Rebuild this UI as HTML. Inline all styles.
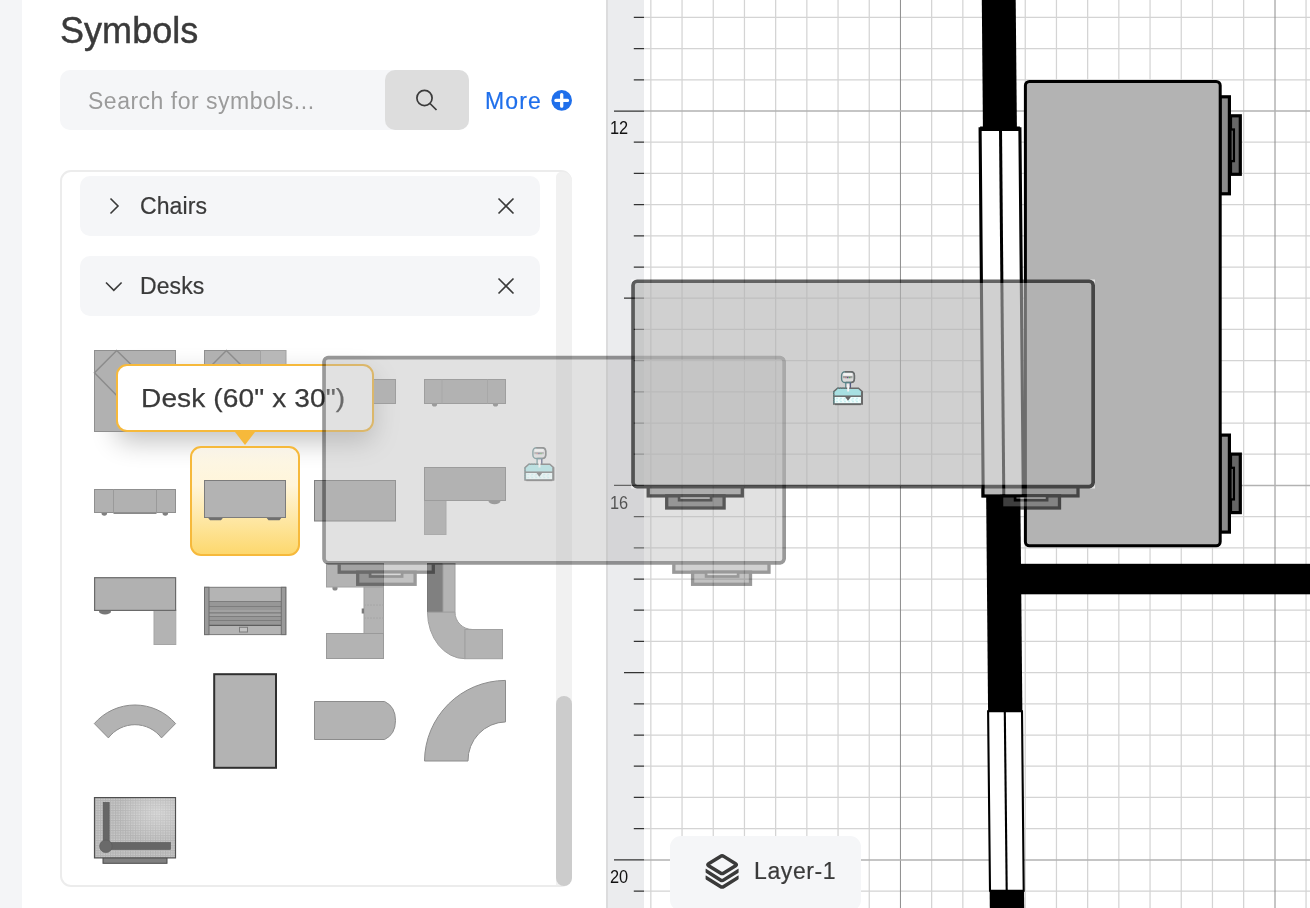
<!DOCTYPE html>
<html><head><meta charset="utf-8">
<style>
*{box-sizing:border-box;margin:0;padding:0}
html,body{width:1310px;height:908px;overflow:hidden;background:#fff}
body{position:relative;font-family:"Liberation Sans",sans-serif;color:#3a3a3a}
.abs{position:absolute}
#title,#search span,#more,.hdr span,#tip span,#layer span{will-change:transform}
#strip{left:0;top:0;width:22px;height:908px;background:#f4f5f7}
#title{left:59.6px;top:8.8px;font-size:36px;line-height:44px;color:#3a3a3a;letter-spacing:.05px;-webkit-text-stroke:.45px #3a3a3a}
#search{left:60px;top:70px;width:409px;height:59.5px;border-radius:10px;background:#f5f6f8}
#search span{position:absolute;left:28px;top:16.5px;font-size:23px;line-height:28px;color:#9b9b9b;white-space:nowrap;letter-spacing:.5px}
#sbtn{left:385px;top:70px;width:84px;height:59.5px;border-radius:10px;background:#dddddd}
#more{-webkit-text-stroke:.2px #1f6feb;left:484.5px;top:87px;font-size:23px;line-height:28px;color:#1f6feb;letter-spacing:1.15px}
#list{left:60px;top:170px;width:512px;height:717px;border:2px solid #ececec;border-radius:11px;background:#fff}
.hdr{left:80px;width:460px;height:60px;border-radius:10px;background:#f5f6f8}
.hdr span{-webkit-text-stroke:.2px #3a3a3a;position:absolute;left:60px;top:16px;font-size:23px;line-height:28px;color:#3a3a3a;letter-spacing:.1px}
#track{left:556px;top:172px;width:15.5px;height:713px;background:#f1f1f1;border-radius:5px 9px 9px 0}
#thumb{left:556px;top:696px;width:15.5px;height:190px;background:#cccccc;border-radius:8px}
#tip{left:116px;top:364px;width:258px;height:68px;border:2px solid #f6b93b;border-radius:11px;background:#fff}
#tipsh{left:116px;top:364px;width:258px;height:68px;border-radius:11px;box-shadow:0 10px 26px rgba(0,0,0,.24)}
#tip span{position:absolute;left:23.2px;top:15.8px;font-size:26.5px;line-height:32px;white-space:nowrap;color:#3a3a3a;letter-spacing:.1px;transform:scaleX(1.06);transform-origin:0 0;-webkit-text-stroke:.25px #3a3a3a}
#tip i{position:absolute;left:116.5px;top:65.5px;width:0;height:0;border-left:10.5px solid transparent;border-right:10.5px solid transparent;border-top:13.5px solid #f6b93b}
#sel{left:190px;top:446px;width:110px;height:110px;border:2px solid #f6b93b;border-radius:11px;background:linear-gradient(#f8f3e8 0%,#fdf6e2 14%,#fff5da 35%,#fee6a0 70%,#fdd86e 100%)}
#layer{left:670px;top:836px;width:191px;height:75px;border-radius:11px;background:#f5f6f8}
#layer span{-webkit-text-stroke:.2px #3a3a3a;position:absolute;left:83.5px;top:21px;font-size:23px;line-height:28px;color:#3a3a3a;letter-spacing:.6px}
</style></head><body>
<div id="strip" class="abs"></div>
<div id="title" class="abs">Symbols</div>
<div id="search" class="abs"><span>Search for symbols...</span></div>
<div id="sbtn" class="abs"></div>
<div id="more" class="abs">More</div>
<div id="list" class="abs"></div>
<div class="abs hdr" style="top:176px"><span>Chairs</span></div>
<div class="abs hdr" style="top:256px"><span>Desks</span></div>
<div id="track" class="abs"></div>
<div id="thumb" class="abs"></div>

<div id="tipsh" class="abs"></div>
<div id="sel" class="abs"></div>
<svg class="abs" style="left:0;top:0" width="606" height="908" viewBox="0 0 606 908">
<defs>
<pattern id="hatch" width="2.500" height="2.500" patternUnits="userSpaceOnUse"><rect width="2.500" height="2.500" fill="#c9c9c9"/><path d="M0 .5H2.500M.5 0V2.500" stroke="#b3b3b3" stroke-width="1"/></pattern>
<radialGradient id="hl" cx="0.78" cy="0.25" r="0.5"><stop offset="0" stop-color="#fff" stop-opacity=".35"/><stop offset="1" stop-color="#fff" stop-opacity="0"/></radialGradient>
</defs>
<!-- header icons -->
<path d="M110.5 198.5L118 206L110.5 213.5" fill="none" stroke="#3a3a3a" stroke-width="1.6"/>
<path d="M106 282.5L113.8 290.3L121.6 282.5" fill="none" stroke="#3a3a3a" stroke-width="1.6"/>
<path d="M498.5 198.5L513.5 213.5M513.5 198.5L498.5 213.5" fill="none" stroke="#3a3a3a" stroke-width="1.6"/>
<path d="M498.5 278.5L513.5 293.5M513.5 278.5L498.5 293.5" fill="none" stroke="#3a3a3a" stroke-width="1.6"/>
<!-- search icon -->
<circle cx="424.5" cy="98" r="7.6" fill="none" stroke="#3a3a3a" stroke-width="1.7"/>
<path d="M430 103.5L436.5 110" stroke="#3a3a3a" stroke-width="1.7"/>
<!-- plus circle -->
<circle cx="561.700" cy="100.400" r="10.300" fill="#1f6feb"/>
<path d="M561.700 94.600V106.200M555.900 100.400H567.500" stroke="#fff" stroke-width="3.300" stroke-linecap="round"/>
<g style="filter:blur(.35px)">
<!-- row1 -->
<g stroke="#8f8f8f" stroke-width="1" fill="#b1b1b1">
<rect x="94.5" y="350.5" width="81" height="81"/>
<path d="M116.7 350.5L139.4 372.7L116.7 395.4L94.5 372.7Z" fill="none" stroke="#8c8c8c" stroke-width="1.5"/>
<rect x="204.5" y="350.5" width="81" height="81"/>
<path d="M212 365L226.4 350.5L241 365" fill="none" stroke="#8c8c8c" stroke-width="1.5"/>
<rect x="260.5" y="350.5" width="25.5" height="40" fill="#b8b8b8" stroke="#a2a2a2"/>
<rect x="314.5" y="379.5" width="81" height="24"/>
<!-- r1c4 -->
<circle cx="434.5" cy="404" r="2.6" fill="#8a8a8a" stroke="none"/><circle cx="495.5" cy="404" r="2.6" fill="#8a8a8a" stroke="none"/>
<rect x="424.5" y="379.5" width="81" height="24"/>
<path d="M442 379.5V403.5M487.5 379.5V403.5" stroke="#a0a0a0"/>
<!-- r2c1 -->
<circle cx="104.3" cy="513" r="2.8" fill="#808080" stroke="none"/><circle cx="165.3" cy="513" r="2.8" fill="#808080" stroke="none"/>
<rect x="113.5" y="511" width="43" height="3" fill="#8a8a8a" stroke="none"/>
<rect x="94.5" y="489.5" width="81" height="23"/>
<path d="M113.5 489.5V512.5M156.5 489.5V512.5" stroke="#9a9a9a"/>
<!-- r2c2 selected desk -->
<path d="M207 516.5H224L221 520.3H210ZM265.5 516.5H282.5L279.5 520.3H268.5Z" fill="#6f6f6f" stroke="none"/>
<rect x="204.5" y="480.5" width="81" height="37" fill="#b3b3b3" stroke="#7c7c7c"/>
<!-- r2c3 -->
<rect x="314.5" y="480.5" width="81" height="40.5" stroke="#7f7f7f"/>
<!-- r2c4 -->
<ellipse cx="494.5" cy="501" rx="6" ry="3.2" fill="#8a8a8a" stroke="none"/>
<rect x="424.5" y="500" width="21.5" height="34.5" fill="#b3b3b3" stroke="#a5a5a5"/>
<rect x="424.5" y="467.5" width="81" height="33" stroke="#8c8c8c"/>
<!-- r3c1 -->
<ellipse cx="105" cy="611.5" rx="6" ry="3" fill="#777" stroke="none"/>
<rect x="154" y="610" width="21.8" height="34.5" fill="#b3b3b3" stroke="#a5a5a5"/>
<rect x="94.6" y="577.7" width="81" height="32.7" stroke="#6a6a6a" stroke-width="1.2"/>
</g>
<!-- r3c2 rolltop -->
<g>
<rect x="204.5" y="587.3" width="81.3" height="47.3" fill="#b4b4b4" stroke="#7a7a7a" stroke-width="1"/>
<rect x="209" y="601" width="72.5" height="24" fill="#979797"/>
<path d="M209 601.5H281.5M209 606.5H281.5M209 612.8H281.5M209 616.5H281.5M209 620.5H281.5" stroke="#7d7d7d" stroke-width="1"/>
<path d="M209 611H281.5M209 615H281.5" stroke="#adadad" stroke-width="1"/>
<path d="M209 625.3H281.5" stroke="#5e5e5e" stroke-width="1.3"/>
<rect x="204.5" y="587.3" width="4.5" height="47.3" fill="#9a9a9a" stroke="#6f6f6f" stroke-width="1"/>
<rect x="281.3" y="587.3" width="4.5" height="47.3" fill="#9a9a9a" stroke="#6f6f6f" stroke-width="1"/>
<rect x="239.5" y="627.3" width="8" height="4.7" fill="#c2c2c2" stroke="#7d7d7d" stroke-width="1"/>
</g>
<!-- r3c3 U-desk -->
<g fill="#b3b3b3" stroke="#a0a0a0" stroke-width="1">
<circle cx="335" cy="588" r="2.6" fill="#8a8a8a" stroke="none"/>
<rect x="326.5" y="563.5" width="57" height="23.5"/>
<rect x="364" y="587" width="19.5" height="46.5"/>
<path d="M364 605H383.500M364 618H383.5" stroke="#a6a6a6" stroke-dasharray="2 1"/>
<rect x="326.500" y="633.5" width="57" height="25" stroke="#9a9a9a"/>
<rect x="361.7" y="608.5" width="2.3" height="5" fill="#7a7a7a" stroke="none"/>
</g>
<!-- r3c4 curve -->
<g stroke="#a0a0a0" stroke-width="1">
<rect x="427.500" y="563.5" width="15.5" height="48.700" fill="#808080" stroke="#787878"/>
<rect x="443" y="563.5" width="12" height="48.700" fill="#b3b3b3"/>
<path d="M427.500 612.2H455A17.500 17.300 0 0 0 472.500 629.5L465 629.5V658.7A37.500 46.500 0 0 1 427.500 612.2Z" fill="#b3b3b3"/>
<rect x="465" y="629.5" width="37.5" height="29.2" fill="#b3b3b3"/>
</g>
<!-- row4 -->
<g fill="#b3b3b3" stroke="#8c8c8c" stroke-width="1">
<path d="M94.3 723.6A53.700 53.700 0 0 1 175.6 723.6L161.500 737.900A33.300 33.300 0 0 0 108.4 737.900Z"/>
<rect x="214.200" y="674.200" width="61.800" height="93.600" stroke="#2f2f2f" stroke-width="2"/>
<path d="M314.500 701.5H384.600Q395.500 706.500 395.500 720.500Q395.500 734.500 384.600 739.500H314.500Z"/>
<path d="M424.500 761.000A81.300 81.300 0 0 1 505.500 680.400V721.900A38.5 38.5 0 0 0 468 761.000Z"/>
</g>
<!-- row5 drafting table -->
<g>
<rect x="103" y="857" width="64" height="6.300" fill="#808080" stroke="#4a4a4a" stroke-width="1"/>
<rect x="94.500" y="797.600" width="81" height="60.300" fill="url(#hatch)" stroke="#4f4f4f" stroke-width="1.2"/>
<rect x="95" y="798" width="80" height="59.500" fill="url(#hl)"/>
<rect x="103.2" y="802.400" width="6" height="40" fill="#666" stroke="#555" stroke-width=".6"/>
<rect x="109" y="842.500" width="61.500" height="7" fill="#666" stroke="#555" stroke-width=".6"/>
<circle cx="105.900" cy="846.300" r="6.300" fill="#6a6a6a" stroke="#5a5a5a" stroke-width=".6"/>
</g>
</g>
</svg>

<svg class="abs" style="left:0;top:0;will-change:transform" width="1310" height="908" viewBox="0 0 1310 908">
<rect x="606" y="0" width="704" height="908" fill="#fff"/>
<path d="M650.85 0V908M682.05 0V908M713.25 0V908M744.45 0V908M775.65 0V908M806.85 0V908M838.05 0V908M869.25 0V908M931.65 0V908M962.85 0V908M994.05 0V908M1025.25 0V908M1056.45 0V908M1087.65 0V908M1118.85 0V908M1150.05 0V908M1181.25 0V908M1212.45 0V908M1243.65 0V908M1306.05 0V908M644 17.40H1310M644 48.60H1310M644 79.80H1310M644 142.20H1310M644 173.40H1310M644 204.60H1310M644 235.80H1310M644 267.00H1310M644 298.20H1310M644 329.40H1310M644 360.60H1310M644 391.80H1310M644 423.00H1310M644 454.20H1310M644 516.60H1310M644 547.80H1310M644 579.00H1310M644 610.20H1310M644 641.40H1310M644 672.60H1310M644 703.80H1310M644 735.00H1310M644 766.20H1310M644 797.40H1310M644 828.60H1310M644 891.00H1310M644 922.20H1310" stroke="#d4d4d4" stroke-width="1.25" fill="none"/>
<path d="M900.45 0V908M1275 0V908" stroke="#8c8c8c" stroke-width="1" fill="none"/>
<path d="M644 111.0H1310M644 485.5H1310M644 859.9H1310" stroke="#b2b2b2" stroke-width="1.5" fill="none"/>
<rect x="606" y="0" width="38" height="908" fill="#ebecee"/>
<rect x="606" y="0" width="2" height="908" fill="#dcdcdd"/>
<path d="M633.8 17.40H644M633.8 48.60H644M633.8 79.80H644M614 111.00H644M633.8 142.20H644M633.8 173.40H644M633.8 204.60H644M633.8 235.80H644M633.8 267.00H644M624 298.20H644M633.8 329.40H644M633.8 360.60H644M633.8 391.80H644M633.8 423.00H644M633.8 454.20H644M614 485.40H644M633.8 516.60H644M633.8 547.80H644M633.8 579.00H644M633.8 610.20H644M633.8 641.40H644M624 672.60H644M633.8 703.80H644M633.8 735.00H644M633.8 766.20H644M633.8 797.40H644M633.8 828.60H644M614 859.80H644M633.8 891.00H644M633.8 922.20H644" stroke="#333" stroke-width="1.25" fill="none"/>
<text x="609.9" y="134.3" font-family="Liberation Sans, sans-serif" font-size="19" fill="#111" textLength="18.2" lengthAdjust="spacingAndGlyphs">12</text>
<text x="609.9" y="508.7" font-family="Liberation Sans, sans-serif" font-size="19" fill="#111" textLength="18.2" lengthAdjust="spacingAndGlyphs">16</text>
<text x="609.9" y="883.2" font-family="Liberation Sans, sans-serif" font-size="19" fill="#111" textLength="18.2" lengthAdjust="spacingAndGlyphs">20</text>
<polygon points="981.8,0 1015.7,0 1024.2,908 989.8,908" fill="#000"/>
<rect x="1018" y="563.8" width="300" height="30.5" fill="#000"/>
<polygon points="980.1,128.8 1019.9,128.8 1023.3,496 983.2,496" fill="#fff" stroke="#000" stroke-width="3.1"/>
<path d="M980.1 128.8H1019.9" stroke="#000" stroke-width="4.4"/>
<path d="M1000.5 128.8L1003.8 496" stroke="#000" stroke-width="3"/>
<polygon points="988.1,711.2 1022.0,711.2 1023.7,890.8 990.0,890.8" fill="#fff" stroke="#000" stroke-width="2.1"/>
<path d="M1004.8 711.2L1006.7 890.8" stroke="#000" stroke-width="2.1"/>
<rect x="1220" y="96.8" width="9.4" height="97" fill="#8c8c8c" stroke="#000" stroke-width="3.2"/>
<rect x="1230.5" y="115.8" width="9.8" height="58.5" fill="#666" stroke="#000" stroke-width="3.2"/>
<rect x="1230.5" y="129.5" width="3.4" height="31.6" fill="#7a7a7a" stroke="#000" stroke-width="2.3"/>
<rect x="1220" y="435.1" width="9.4" height="97" fill="#8c8c8c" stroke="#000" stroke-width="3.2"/>
<rect x="1230.5" y="454.1" width="9.8" height="58.5" fill="#666" stroke="#000" stroke-width="3.2"/>
<rect x="1230.5" y="467.8" width="3.4" height="31.6" fill="#7a7a7a" stroke="#000" stroke-width="2.3"/>
<rect x="1025.4" y="81.5" width="194.8" height="464.3" rx="4" fill="#b3b3b3" stroke="#000" stroke-width="3"/>
</svg>
<div id="tip" class="abs"><span>Desk (60" x 30")</span><i></i></div>
<svg class="abs" style="left:0;top:0" width="1310" height="908" viewBox="0 0 1310 908">
<defs>
<g id="desk">
<rect x="17" y="204" width="94.1" height="12.500" fill="#8c8c8c" stroke="#000" stroke-width="3.3"/>
<rect x="35.500" y="216.500" width="57.400" height="12.100" fill="#666" stroke="#000" stroke-width="3.3"/>
<rect x="47.900" y="216.500" width="32" height="4.300" fill="#a0a0a0" stroke="#000" stroke-width="2.7"/>
<rect x="351.600" y="204" width="95.200" height="12.500" fill="#8c8c8c" stroke="#000" stroke-width="3.3"/>
<rect x="370.400" y="216.500" width="57.900" height="12.100" fill="#666" stroke="#000" stroke-width="3.3"/>
<rect x="383.900" y="216.500" width="32" height="4.300" fill="#a0a0a0" stroke="#000" stroke-width="2.7"/>
<rect x="1.850" y="1.850" width="460.100" height="205.300" rx="4" fill="#b3b3b3" stroke="#000" stroke-width="3.700"/>
<path d="M458.300 0H463.800V5.500A5.500 5.500 0 0 0 458.300 0ZM458.300 209H463.800V203.500A5.500 5.500 0 0 1 458.300 209ZM5.500 0H0V5.500A5.500 5.500 0 0 1 5.500 0ZM5.500 209H0V203.500A5.500 5.500 0 0 0 5.500 209Z" fill="#fff"/>
</g>
<g id="stamp">
<rect x="8.600" y="0.700" width="12.800" height="10.800" rx="3.600" fill="#dcdcdc" stroke="#5f8487" stroke-width="1.4"/>
<path d="M12 0.700H17.800Q21.400 0.700 21.400 4.300V8Q21.400 11.500 17.800 11.500H13" fill="none" stroke="#6b6b6b" stroke-width="1.5"/>
<rect x="10.500" y="2.200" width="8.500" height="2.400" fill="#f4f4f4"/>
<rect x="10" y="5" width="9.500" height="2.200" fill="#a3a3a3"/>
<rect x="12.300" y="6" width="1.200" height="1.200" fill="#c77"/><rect x="14" y="6" width="1.300" height="1.200" fill="#558"/><rect x="16" y="6" width="1.300" height="1.200" fill="#5a5"/>
<rect x="12.800" y="11.800" width="4.600" height="9" fill="#f3e9ea" stroke="#4f7f85" stroke-width="1.2"/>
<path d="M17.400 12V19" stroke="#555a80" stroke-width="1.3"/>
<path d="M4.500 17.300H25.500L29.300 20.600V33H0.700V20.600Z" fill="#a8e0e2" stroke="#6a6a6a" stroke-width="1.4"/>
<path d="M4.500 17.300H12.500M0.700 20.600V33" stroke="#5f8a8c" stroke-width="1.4" stroke-dasharray="1.400 1"/>
<rect x="14.200" y="14.500" width="2" height="6" fill="#f6f6f6"/>
<rect x="2" y="26" width="26" height="6.300" fill="#eefcfc"/>
<path d="M3 27.500H27M3 30.500H27" stroke="#c9f1f1" stroke-width="1.400" stroke-dasharray="2 2"/>
<path d="M4 29H27" stroke="#d6f5f5" stroke-width="1.400" stroke-dasharray="2 2" stroke-dashoffset="2"/>
<path d="M0.700 25.200H29.300" stroke="#6a6a6a" stroke-width="1.500"/>
<path d="M11.800 25.500L15 29.800L18.200 25.500Z" fill="#666"/>
<path d="M2 33.300H28" stroke="#686868" stroke-width="1.700"/>
<path d="M28.900 20.600V33" stroke="#6a6a6a" stroke-width="1.900"/>
</g>
</defs>
<use href="#desk" x="322.200" y="355.700" opacity="0.4"/>
<use href="#desk" x="631.200" y="279.400" opacity="0.61"/>
<use href="#stamp" x="833" y="371"/>
<use href="#stamp" x="524.300" y="447" opacity="0.62"/>
</svg>

<div id="layer" class="abs"><span>Layer-1</span></div>
<svg class="abs" style="left:0;top:0" width="1310" height="908" viewBox="0 0 1310 908">
<defs><clipPath id="lc"><rect x="705.600" y="850" width="33" height="45"/></clipPath></defs>
<g clip-path="url(#lc)" fill="none" stroke="#3a3a3a" stroke-width="3.500" stroke-linejoin="round" stroke-linecap="round">
<path d="M720.400 856.400Q722.100 855.300 723.800 856.400L735.600 863.700Q737.200 864.700 735.600 865.700L723.800 873Q722.100 874.100 720.400 873L708.600 865.700Q707 864.700 708.600 863.700Z"/>
<path d="M704.700 870.100L720.400 879.900Q722.100 881 723.800 879.900L739.500 870.100" stroke-linecap="butt"/>
<path d="M704.700 876.700L720.400 886.500Q722.100 887.600 723.800 886.500L739.500 876.700" stroke-linecap="butt"/>
</g>
</svg>

</body></html>
